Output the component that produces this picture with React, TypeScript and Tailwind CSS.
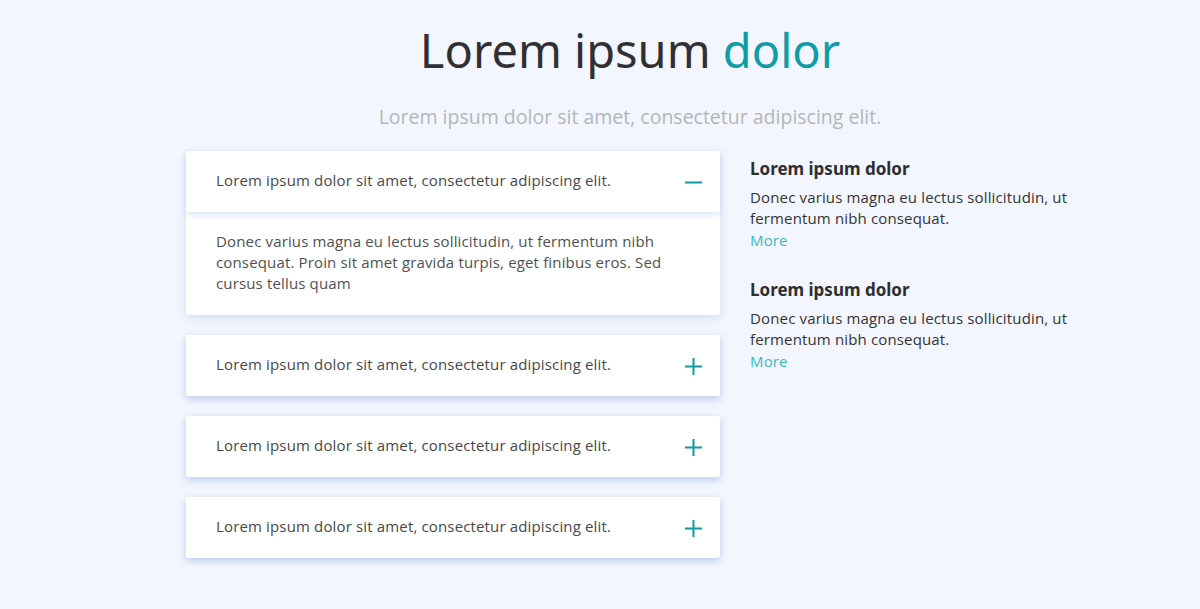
import { useState } from "react";

const items = [
  {
    q: "Lorem ipsum dolor sit amet, consectetur adipiscing elit.",
    a: "Donec varius magna eu lectus sollicitudin, ut fermentum nibh consequat. Proin sit amet gravida turpis, eget finibus eros. Sed cursus tellus quam",
  },
  {
    q: "Lorem ipsum dolor sit amet, consectetur adipiscing elit.",
    a: "Donec varius magna eu lectus sollicitudin, ut fermentum nibh consequat. Proin sit amet gravida turpis, eget finibus eros. Sed cursus tellus quam",
  },
  {
    q: "Lorem ipsum dolor sit amet, consectetur adipiscing elit.",
    a: "Donec varius magna eu lectus sollicitudin, ut fermentum nibh consequat. Proin sit amet gravida turpis, eget finibus eros. Sed cursus tellus quam",
  },
  {
    q: "Lorem ipsum dolor sit amet, consectetur adipiscing elit.",
    a: "Donec varius magna eu lectus sollicitudin, ut fermentum nibh consequat. Proin sit amet gravida turpis, eget finibus eros. Sed cursus tellus quam",
  },
];

const notes = [
  {
    title: "Lorem ipsum dolor",
    body: "Donec varius magna eu lectus sollicitudin, ut fermentum nibh consequat.",
  },
  {
    title: "Lorem ipsum dolor",
    body: "Donec varius magna eu lectus sollicitudin, ut fermentum nibh consequat.",
  },
];

export default function App() {
  const [open, setOpen] = useState(0);

  return (
    <div className="min-h-[609px] w-full bg-[#f3f6fe] font-['Open_Sans',sans-serif]">
      {/* ---------- Heading ---------- */}
      <div className="pl-[60px] pt-[20px] text-center">
        <h1 className="font-['Noto_Sans',sans-serif] text-[47px] leading-[60px] text-[#303034]">
          Lorem ipsum <span className="text-[#0d9ca8]">dolor</span>
        </h1>
        <p className="mt-[24px] text-[19.5px] leading-[26px] text-[#b2b6ba]">
          Lorem ipsum dolor sit amet, consectetur adipiscing elit.
        </p>
      </div>

      {/* ---------- Body ---------- */}
      <div className="mt-[21px] flex gap-[30px] pl-[186px]">
        <div className="flex w-[534px] flex-col gap-[20px]">
          {items.map((it, i) => (
            <AccordionItem
              key={i}
              question={it.q}
              answer={it.a}
              open={open === i}
              onToggle={() => setOpen(open === i ? -1 : i)}
            />
          ))}
        </div>

        <div className="flex w-[330px] flex-col gap-[28px] pt-[7px]">
          {notes.map((n, i) => (
            <div key={i}>
              <h3 className="font-['Noto_Sans',sans-serif] text-[17px] font-bold leading-[22px] text-[#2e2e30]">
                {n.title}
              </h3>
              <p className="mt-[7px] text-[15px] leading-[21px] tracking-[0.15px] text-[#333336]">
                {n.body}
              </p>
              <a href="#" className="mt-[1px] block text-[15px] leading-[21px] tracking-[0.15px] text-[#3db6c2]">
                More
              </a>
            </div>
          ))}
        </div>
      </div>
    </div>
  );
}

function AccordionItem({
  question,
  answer,
  open,
  onToggle,
}: {
  question: string;
  answer: string;
  open: boolean;
  onToggle: () => void;
}) {
  return (
    <div className="rounded-[3px] bg-white shadow-[0_3px_8px_rgba(170,190,230,0.45)]">
      <button
        type="button"
        onClick={onToggle}
        className="relative flex h-[61px] w-full items-center justify-between rounded-[3px] bg-white pl-[30px] pr-[17px] text-left shadow-[0_3px_6px_rgba(170,190,230,0.4)]"
      >
        <span className="-mt-[3px] text-[15px] tracking-[0.15px] text-[#48484c]">{question}</span>
        <svg width="19" height="19" viewBox="0 0 19 19" className="mt-[2px] text-[#0e9aa7]">
          <rect x="1" y="8.5" width="17" height="2" fill="currentColor" />
          {!open && <rect x="8.5" y="1" width="2" height="17" fill="currentColor" />}
        </svg>
      </button>
      {open && (
        <div className="pb-[21px] pl-[30px] pr-[40px] pt-[19px] text-[15px] leading-[21px] tracking-[0.15px] text-[#505054]">
          {answer}
        </div>
      )}
    </div>
  );
}
